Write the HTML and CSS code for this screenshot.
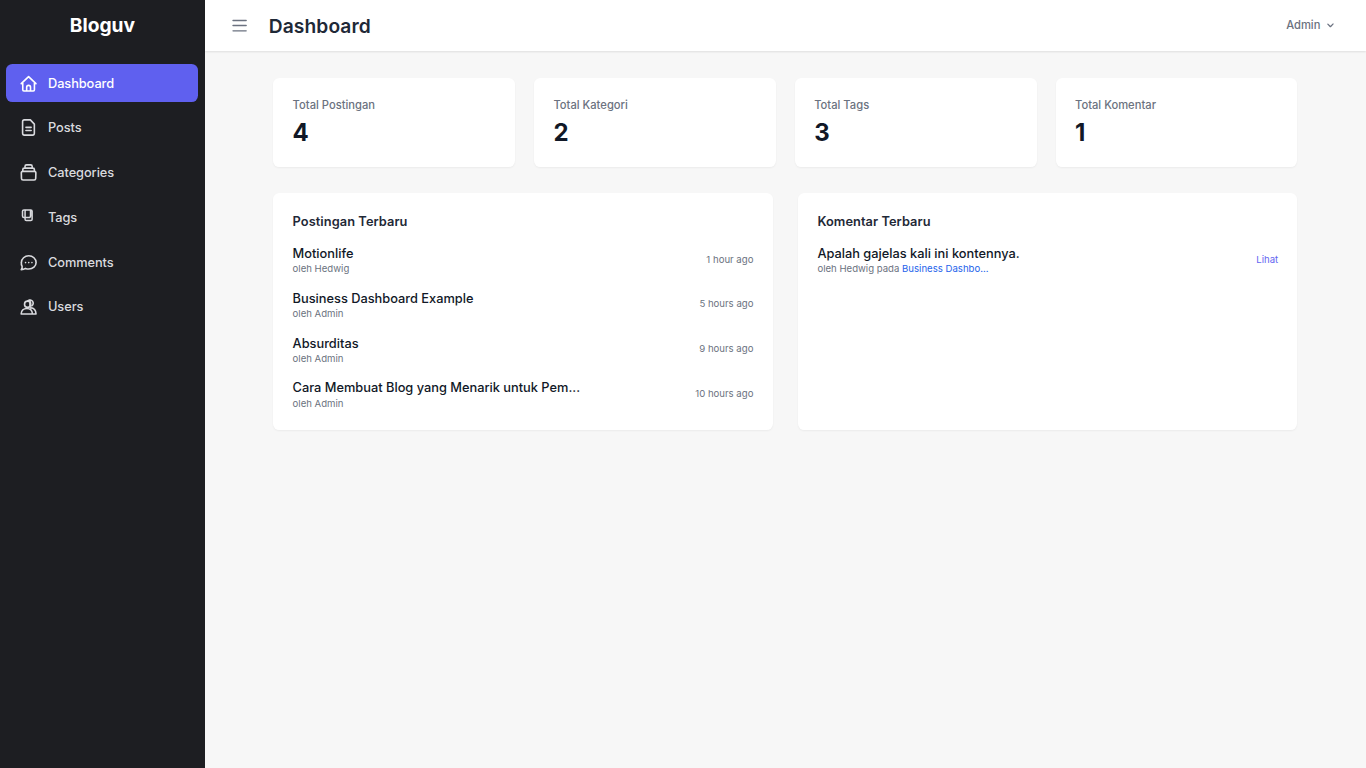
FILE: index.html
```html
<!DOCTYPE html>
<html lang="id">
<head>
<meta charset="utf-8">
<title>Dashboard - Bloguv</title>
<link rel="stylesheet" href="styles.css">
</head>
<body>
<div class="app">
  <aside class="sidebar">
    <div class="brand">Bloguv</div>
    <nav class="nav">
      <a class="nav-item active"><svg class="icon" viewBox="0 0 24 24"><path d="M2.8 12 12 3.200l9.200 8.800M4.700 10.400v9.400c0 .8.6 1.400 1.400 1.400h11.800c.8 0 1.400-.6 1.400-1.400v-9.400M9.600 21v-4.400a2.400 2.400 0 0 1 4.800 0V21"/></svg><span>Dashboard</span></a>
      <a class="nav-item"><svg class="icon" viewBox="0 0 24 24"><path d="M6.700 2.400h7.500l5 5.300v11.500a2.200 2.200 0 0 1-2.200 2.200H6.700a2.200 2.200 0 0 1-2.200-2.200V4.600a2.200 2.200 0 0 1 2.200-2.200ZM8.700 11.700h6.500M8.700 15.700h6.500"/></svg><span>Posts</span></a>
      <a class="nav-item"><svg class="icon" viewBox="0 0 24 24"><path d="M4.700 10.500h14.600a1.800 1.800 0 0 1 1.800 2l-.2 6.800a2 2 0 0 1-2 2H5.100a2 2 0 0 1-2-2l-.2-6.800a1.800 1.800 0 0 1 1.800-2ZM4.700 10.300V8.400a2 2 0 0 1 2-2h10.600a2 2 0 0 1 2 2v1.900M7.500 6.200v-1.900a2 2 0 0 1 2-2h5a2 2 0 0 1 2 2v1.900"/></svg><span>Categories</span></a>
      <a class="nav-item"><svg class="icon icon-tags" viewBox="0 0 24 24"><path d="M9 2.400h5.800a1.600 1.600 0 0 1 1.600 1.600v10a1.600 1.600 0 0 1-1.600 1.600H9.200a1.600 1.600 0 0 1-1.600-1.600V4A1.600 1.600 0 0 1 9 2.400ZM8.300 2.400H6.200a1.800 1.800 0 0 0-1.800 1.800v5.900a1.800 1.800 0 0 0 1.800 1.800h6.400a1.800 1.800 0 0 0 1.800-1.800V2.700"/></svg><span>Tags</span></a>
      <a class="nav-item"><svg class="icon" viewBox="0 0 24 24"><path d="M12.200 3.500c5.100 0 9.200 3.700 9.200 8.300s-4.100 8.300-9.200 8.300c-1.500 0-2.900-.3-4.100-.8-1.400 1-3.100 1.500-5.300 1.500.9-1.300 1.400-2.600 1.100-4.100a7.700 7.700 0 0 1-.9-4.900c0-4.600 4.100-8.300 9.200-8.300Z"/><path class="dots" d="M8.200 12h.01M12.200 12h.01M16.200 12h.01"/></svg><span>Comments</span></a>
      <a class="nav-item"><svg class="icon" viewBox="0 0 24 24"><circle cx="10.800" cy="9" r="3.900"/><path d="M11 4.900a4 4 0 1 1 5 6.200M13.700 3.500v7.200M2.700 21.200c0-4.300 3.300-6.900 7.200-6.900s6.900 2.600 6.900 6.900ZM14.500 13.600c4.100-.2 6.800 3.100 6.800 7.600h-4.500"/></svg><span>Users</span></a>
    </nav>
  </aside>
  <div class="content">
    <header class="topbar">
      <svg class="menu" viewBox="0 0 24 24"><path d="M3.800 5.600h16.400M3.800 12h16.400M3.800 18.600h16.400"/></svg>
      <h1 class="page-title">Dashboard</h1>
      <div class="user"><span>Admin</span><svg class="chevron" viewBox="0 0 20 20"><path d="M5.300 7.300a1 1 0 0 1 1.400 0L10 10.600l3.300-3.300a1 1 0 1 1 1.400 1.400l-4 4a1 1 0 0 1-1.400 0l-4-4a1 1 0 0 1 0-1.400Z"/></svg></div>
    </header>
    <main class="main">
      <section class="stats">
        <div class="card"><div class="label">Total Postingan</div><div class="number">4</div></div>
        <div class="card"><div class="label">Total Kategori</div><div class="number">2</div></div>
        <div class="card"><div class="label">Total Tags</div><div class="number">3</div></div>
        <div class="card"><div class="label">Total Komentar</div><div class="number">1</div></div>
      </section>
      <section class="panels">
        <div class="card">
          <h2 class="heading">Postingan Terbaru</h2>
          <div class="list">
            <div class="row"><div><div class="title">Motionlife</div><div class="meta">oleh Hedwig</div></div><span class="meta">1 hour ago</span></div>
            <div class="row"><div><div class="title">Business Dashboard Example</div><div class="meta">oleh Admin</div></div><span class="meta">5 hours ago</span></div>
            <div class="row"><div><div class="title">Absurditas</div><div class="meta">oleh Admin</div></div><span class="meta">9 hours ago</span></div>
            <div class="row"><div><div class="title">Cara Membuat Blog yang Menarik untuk Pem...</div><div class="meta">oleh Admin</div></div><span class="meta">10 hours ago</span></div>
          </div>
        </div>
        <div class="card">
          <h2 class="heading">Komentar Terbaru</h2>
          <div class="list">
            <div class="row"><div><div class="title">Apalah gajelas kali ini kontennya.</div><div class="meta">oleh Hedwig pada <a class="post-link">Business Dashbo...</a></div></div><a class="meta view-link">Lihat</a></div>
          </div>
        </div>
      </section>
    </main>
  </div>
</div>
</body>
</html>
```
FILE: styles.css
```css
* { box-sizing: border-box; margin: 0; padding: 0; }
body { font-family: Inter, "Liberation Sans", sans-serif; font-size: 12.8px; line-height: 19.2px; background: #f7f7f7; color: #111827; }
.app { display: flex; height: 100vh; overflow: hidden; }
.sidebar { width: 204.8px; flex: none; background: #1d1e22; color: #d9dade; }
.brand { height: 51.2px; line-height: 51.2px; text-align: center; font-size: 19.2px; font-weight: 700; color: #fff; }
.nav { display: flex; flex-direction: column; gap: 6.4px; padding: 12.8px 6.4px; }
.nav-item { display: flex; align-items: center; gap: 9.6px; height: 38.4px; padding: 0 12.8px; border-radius: 6.4px; font-weight: 500; letter-spacing: -0.07px; }
.nav-item.active { background: #5f60ef; color: #fff; }
.icon { width: 19.2px; height: 19.2px; fill: none; stroke: currentColor; stroke-width: 2; stroke-linecap: round; stroke-linejoin: round; }
.icon-tags { stroke-width: 1.9; }
.dots { stroke-width: 2; }
.content { flex: 1; min-width: 0; }
.topbar { display: flex; align-items: center; height: 51.2px; padding: 0 29.6px 0 25.6px; background: #fff; box-shadow: 0 1px 2px rgba(0,0,0,.1); }
.menu { width: 19.2px; height: 19.2px; fill: none; stroke: #6b7280; stroke-width: 1.8; stroke-linecap: round; }
.page-title { margin-left: 19.2px; padding-top: 1.6px; font-size: 19.2px; line-height: 25.6px; font-weight: 600; letter-spacing: 0.1px; color: #1f2937; }
.user { display: flex; align-items: center; gap: 3.2px; margin-left: auto; font-size: 11.2px; font-weight: 500; color: #6b7280; }
.chevron { width: 12.8px; height: 12.8px; fill: #6b7280; }
.main { width: 1024px; margin: 0 auto; padding-top: 26.4px; }
.stats { display: grid; grid-template-columns: repeat(4, 1fr); gap: 19.2px; }
.panels { display: grid; grid-template-columns: 1fr 1fr; gap: 25.6px; margin-top: 25.6px; }
.card { background: #fff; border-radius: 6.4px; padding: 19.2px; box-shadow: 0 1px 2px rgba(0,0,0,.05); }
.label { font-size: 11.2px; line-height: 16px; font-weight: 500; color: #6b7280; }
.number { padding-top: 4.2px; font-size: 24px; line-height: 31px; font-weight: 700; }
.heading { font-size: 12.8px; line-height: 19.2px; font-weight: 600; letter-spacing: 0.07px; color: #1f2937; }
.list { display: flex; flex-direction: column; gap: 12.8px; margin-top: 12.8px; }
.row { display: flex; align-items: center; justify-content: space-between; }
.title { font-weight: 500; line-height: 19.2px; }
.meta { font-size: 9.6px; line-height: 12.8px; color: #6b7280; }
.post-link { color: #2563eb; }
.view-link { color: #6366f1; }
```
